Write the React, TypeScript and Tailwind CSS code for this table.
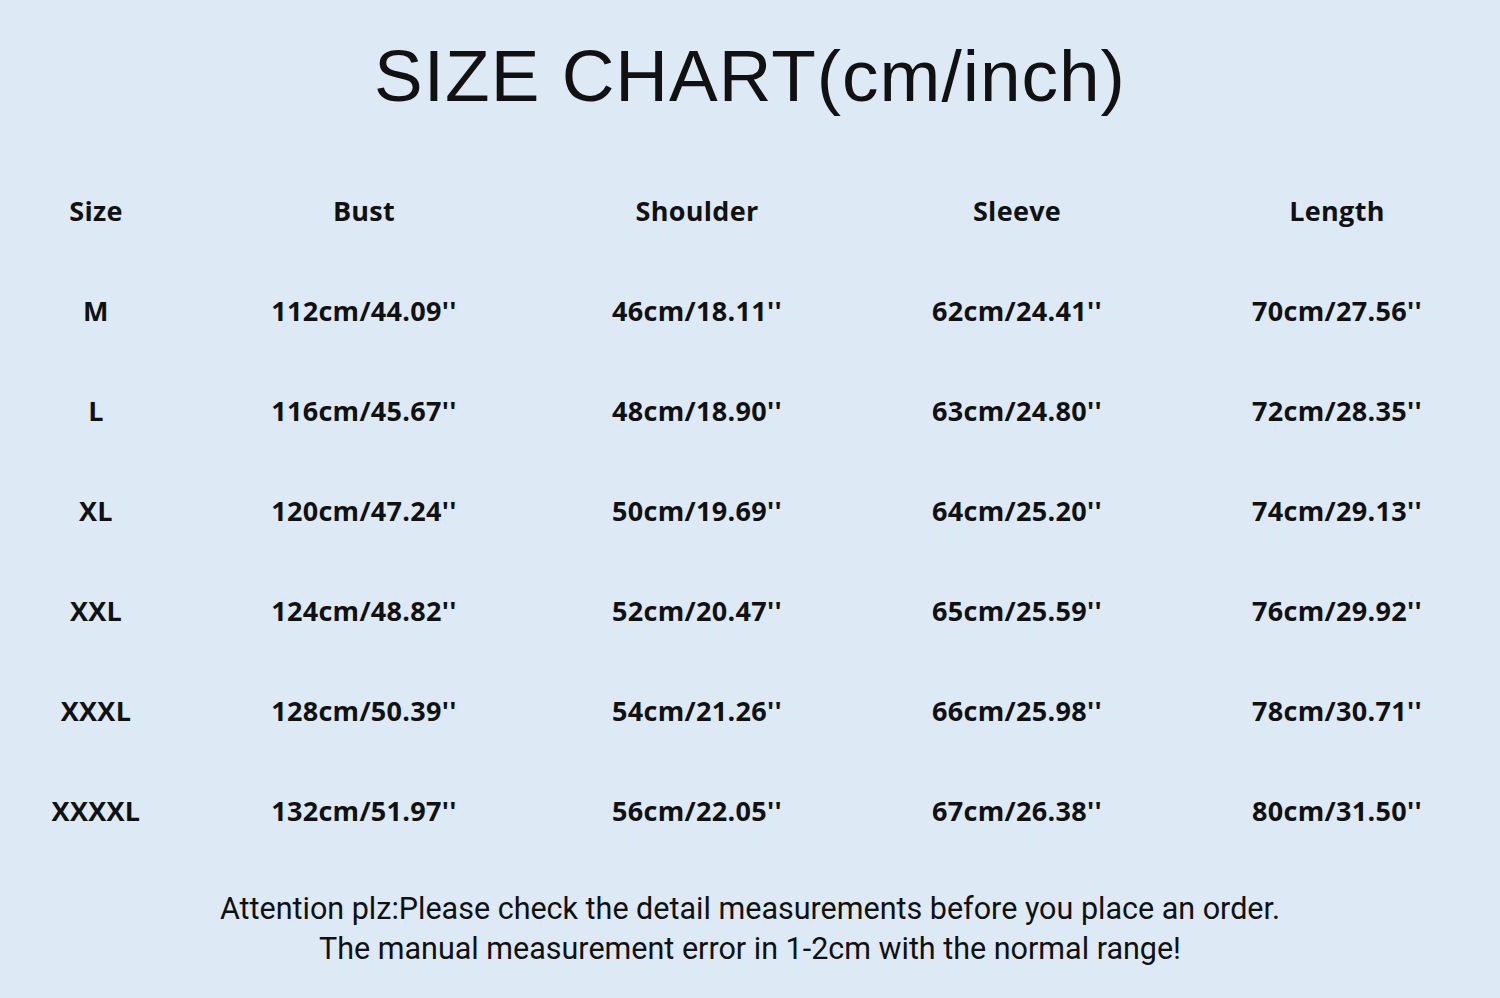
const headers = ['Size', 'Bust', 'Shoulder', 'Sleeve', 'Length']

const rows = [
  ['M', '112cm/44.09\'\'', '46cm/18.11\'\'', '62cm/24.41\'\'', '70cm/27.56\'\''],
  ['L', '116cm/45.67\'\'', '48cm/18.90\'\'', '63cm/24.80\'\'', '72cm/28.35\'\''],
  ['XL', '120cm/47.24\'\'', '50cm/19.69\'\'', '64cm/25.20\'\'', '74cm/29.13\'\''],
  ['XXL', '124cm/48.82\'\'', '52cm/20.47\'\'', '65cm/25.59\'\'', '76cm/29.92\'\''],
  ['XXXL', '128cm/50.39\'\'', '54cm/21.26\'\'', '66cm/25.98\'\'', '78cm/30.71\'\''],
  ['XXXXL', '132cm/51.97\'\'', '56cm/22.05\'\'', '67cm/26.38\'\'', '80cm/31.50\'\''],
]

export default function App() {
  return (
    <div className="w-[1500px] h-[998px] bg-[#dde9f4] text-[#111] overflow-hidden flex flex-col">
      <div className="h-[161px] flex items-start justify-center pt-[39px]">
        <h1 className="font-['Liberation_Sans',sans-serif] text-[73px] leading-none tracking-[1px]">
          SIZE CHART(cm/inch)
        </h1>
      </div>

      <div className="grid grid-cols-[192px_344px_322px_318px_322px] auto-rows-[100px] font-['Open_Sans',sans-serif] font-bold text-[27px] tracking-[0.3px]">
        {headers.map((h) => (
          <div key={h} className="flex items-center justify-center">{h}</div>
        ))}
        {rows.map((r) =>
          r.map((cell, i) => (
            <div key={r[0] + i} className="flex items-center justify-center">{cell}</div>
          ))
        )}
      </div>

      <div className="mt-[28px] text-center font-['Roboto',sans-serif] text-[30.5px] leading-[40px]">
        <p>Attention plz:Please check the detail measurements before you place an order.</p>
        <p>The manual measurement error in 1-2cm with the normal range!</p>
      </div>
    </div>
  )
}
